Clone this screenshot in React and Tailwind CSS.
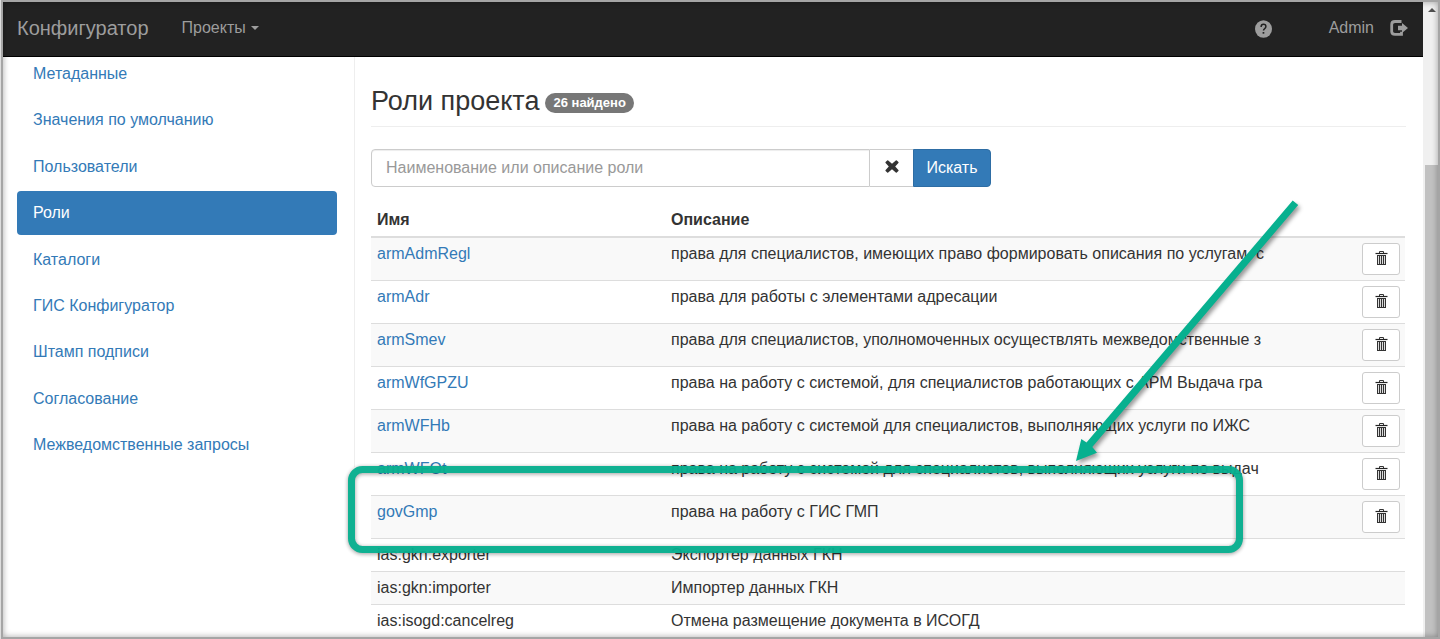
import React from "react";

const menuItems = [
  "Метаданные",
  "Значения по умолчанию",
  "Пользователи",
  "Роли",
  "Каталоги",
  "ГИС Конфигуратор",
  "Штамп подписи",
  "Согласование",
  "Межведомственные запросы",
];

const roles = [
  { name: "armAdmRegl", text: "права для специалистов, имеющих право формировать описания по услугам, с", editable: true },
  { name: "armAdr", text: "права для работы с элементами адресации", editable: true },
  { name: "armSmev", text: "права для специалистов, уполномоченных осуществлять межведомственные з", editable: true },
  { name: "armWfGPZU", text: "права на работу с системой, для специалистов работающих с АРМ Выдача гра", editable: true },
  { name: "armWFHb", text: "права на работу с системой для специалистов, выполняющих услуги по ИЖС", editable: true },
  { name: "armWFOt", text: "права на работу с системой для специалистов, выполняющих услуги по выдач", editable: true },
  { name: "govGmp", text: "права на работу с ГИС ГМП", editable: true },
  { name: "ias:gkn:exporter", text: "Экспортер данных ГКН" },
  { name: "ias:gkn:importer", text: "Импортер данных ГКН" },
  { name: "ias:isogd:cancelreg", text: "Отмена размещение документа в ИСОГД" },
];

const TrashIcon = () => (
  <svg width="13" height="14" viewBox="0 0 13 14" fill="none" aria-hidden="true">
    <path d="M4.5 2V.5h4V2" stroke="#333" />
    <path d="M.5 2.5h12" stroke="#222" strokeWidth="1.2" />
    <path d="M2 4h9v10H2z" fill="#333" />
    <path d="M3.5 5v8M5.5 5v8M7.5 5v8M9.5 5v8" stroke="#ddd" />
  </svg>
);

const CrossIcon = () => (
  <svg width="14" height="13" viewBox="0 0 14 13" aria-hidden="true">
    <path
      d="M3.2.4 7 3.7 10.8.4q.5-.4 1 .1l1.6 1.6q.5.5 0 1L10.2 6.5l3.2 3.4q.5.5 0 1l-1.6 1.6q-.5.5-1 .1L7 9.300l-3.800 3.300q-.5.4-1-.1L.6 10.900q-.5-.5 0-1l3.200-3.400L.6 3.100q-.5-.5 0-1L2.200.5q.5-.5 1-.1z"
      fill="#333"
    />
  </svg>
);

const HelpIcon = () => (
  <svg width="17" height="18" viewBox="0 0 17 18" aria-hidden="true">
    <ellipse cx="8.5" cy="9" rx="8.5" ry="8.8" fill="#9d9d9d" />
    <path
      d="M6.1 7q0-2.700 2.400-2.700T10.900 6.500q0 1.300-1.200 2.100T8.500 10.600"
      fill="none"
      stroke="#222"
      strokeWidth="1.5"
    />
    <path d="M7.600 12h1.700v1.700H7.600z" fill="#222" />
  </svg>
);

const LogoutIcon = () => (
  <svg width="18" height="16" viewBox="0 0 18 16" aria-hidden="true">
    <path
      d="M11.5 1.500H5Q1.700 1.500 1.700 4.500v7Q1.700 14.300 5 14.300h6.500v-2.500"
      fill="none"
      stroke="#9d9d9d"
      strokeWidth="2.8"
    />
    <path d="M8 5.800h4V3l6 5-6 5v-2.800H8z" fill="#9d9d9d" />
  </svg>
);

const Navbar = () => {
  return (
    <nav className="relative z-10 flex h-[55px] shrink-0 items-center border-b border-black bg-[#222] pr-[15px] pb-[2px] pl-[14px] text-[#9d9d9d]">
      <a href="#" className="text-xl">
        Конфигуратор
      </a>
      <button className="ml-[33px] flex items-center gap-[5px]">
        Проекты
        <span className="border-x-4 border-t-4 border-x-transparent border-t-[#9d9d9d]"></span>
      </button>
      <div className="ml-auto flex items-center">
        <a href="#" aria-label="Справка" className="mr-[57px] pt-[2px]">
          <HelpIcon />
        </a>
        <a href="#" className="mr-4">
          Admin
        </a>
        <a href="#" aria-label="Выход">
          <LogoutIcon />
        </a>
      </div>
    </nav>
  );
};

const Sidebar = () => {
  return (
    <aside className="w-[352px] shrink-0 border-r border-[#eee] pr-[17px] pl-[14px]">
      <ul className="flex min-h-[415px] flex-col justify-between">
        {menuItems.map((item) => (
          <li key={item}>
            <a
              href="#"
              className={
                item === "Роли"
                  ? "block rounded bg-[#337ab7] px-4 py-[11px] leading-[22px] text-white"
                  : "block rounded px-4 py-[11px] leading-[22px] text-[#337ab7]"
              }
            >
              {item}
            </a>
          </li>
        ))}
      </ul>
    </aside>
  );
};

const Search = () => {
  return (
    <form className="mt-[22px] flex h-[38px] w-[620px]">
      <input
        type="text"
        aria-label="Поиск роли"
        placeholder="Наименование или описание роли"
        className="min-w-0 flex-1 rounded-l border border-[#ccc] px-[14px] shadow-[inset_0_1px_1px_rgba(0,0,0,0.075)] placeholder:text-[#999]"
      />
      <button
        type="button"
        aria-label="Очистить"
        className="flex w-[43px] items-center justify-center border-y border-[#ccc] pb-1"
      >
        <CrossIcon />
      </button>
      <button
        type="button"
        className="w-[78px] rounded-r border border-[#2e6da4] bg-[#337ab7] text-white"
      >
        Искать
      </button>
    </form>
  );
};

const RolesTable = () => {
  return (
    <div className="mt-5 pr-px">
      <table className="w-full table-fixed border-separate border-spacing-0 text-left leading-[22px]">
        <thead>
          <tr>
            <th className="w-[294px] border-b-2 border-[#ddd] px-[6px] pt-[2px] pb-[5px]">Имя</th>
            <th className="border-b-2 border-[#ddd] px-[6px] pt-[2px] pb-[5px]">Описание</th>
            <th className="w-[140px] border-b-2 border-[#ddd]"></th>
          </tr>
        </thead>
        <tbody>
          {roles.map((role) => (
            <tr key={role.name} className="align-top odd:bg-[#f9f9f9]">
              <td className="border-b border-[#ddd] px-[6px] py-[5px]">
                {role.editable ? (
                  <a href="#" className="text-[#337ab7]">
                    {role.name}
                  </a>
                ) : (
                  role.name
                )}
              </td>
              <td className="border-b border-[#ddd] py-[5px] pl-[6px]">
                <div className="overflow-hidden whitespace-nowrap">{role.text}</div>
              </td>
              <td className="border-b border-[#ddd] px-[5px] py-[5px]">
                {role.editable && (
                  <button
                    aria-label="Удалить"
                    className="ml-auto flex h-8 w-[38px] items-center justify-center rounded-[3px] border border-[#ccc] bg-white pb-[2px]"
                  >
                    <TrashIcon />
                  </button>
                )}
              </td>
            </tr>
          ))}
        </tbody>
      </table>
    </div>
  );
};

// Frame around the role row and the arrow that points to it
const Callout = () => (
  <svg
    className="pointer-events-none absolute top-0 left-0 z-20"
    width="1440"
    height="639"
    viewBox="0 0 1440 639"
    aria-hidden="true"
  >
    <g opacity="0.96" className="drop-shadow-[0_1px_2px_rgba(0,0,0,0.4)]">
      <rect x="351.5" y="469.5" width="888" height="80" rx="11" fill="none" stroke="#07ae8e" strokeWidth="7" />
    </g>
    <g className="drop-shadow-[2px_3px_2px_rgba(0,0,0,0.4)]" fill="#07b08f">
      <path d="M1292.700 200.500 1298.200 205 1092.300 446.900l4.700 5.800-21 8.300 5.300-22 5.200 3.500z" />
    </g>
  </svg>
);

const Scrollbar = () => (
  <div className="flex w-[15px] shrink-0 flex-col items-end bg-[#f0f0f0]">
    <span className="mt-[6px] mr-[2px] border-x-4 border-b-4 border-x-transparent border-b-[#505050]"></span>
    <div className="mt-[153px] w-[13px] flex-1 bg-[#c1c1c1]"></div>
  </div>
);

const App = () => {
  return (
    <div className="relative h-screen overflow-hidden bg-[#ddd] pl-px font-['Liberation_Sans',Arial,sans-serif] text-base text-[#333]">
      <div className="relative flex h-full overflow-hidden border-2 border-[#a5a5a5] bg-white">
        <div className="flex min-w-0 flex-1 flex-col">
          <Navbar />
          <div className="-mt-[5px] flex min-h-0 flex-1 items-start">
            <Sidebar />
            <main className="min-w-0 flex-1 pt-[33px] pr-[17px] pl-4">
              <div className="flex items-center gap-[6px] border-b border-[#eee] pb-[9px]">
                <h1 className="text-[27px] leading-8">Роли проекта</h1>
                <span className="mt-1 rounded-full bg-[#777] px-2 text-[13px] leading-5 font-bold text-white">
                  26 найдено
                </span>
              </div>
              <Search />
              <RolesTable />
            </main>
          </div>
        </div>
        <Scrollbar />
        <div className="pointer-events-none absolute inset-0 z-10 shadow-[inset_0_0_6px_rgba(0,0,0,0.35)]"></div>
      </div>
      <Callout />
    </div>
  );
};

export default App;
